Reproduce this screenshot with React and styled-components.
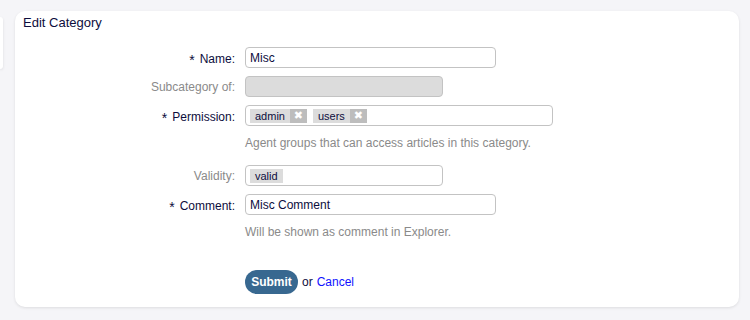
import React from "react";
import styled, { createGlobalStyle } from "styled-components";

const GlobalStyle = createGlobalStyle`
  html, body {
    margin: 0;
    padding: 0;
    background: #f5f5f8;
    font-family: "Liberation Sans", Arial, sans-serif;
    font-size: 12px;
    color: #0d0d3d;
  }
`;

const fields = [
  { label: "Name", required: true, type: "text", value: "Misc", width: 251 },
  { label: "Subcategory of", type: "disabled", width: 198 },
  {
    label: "Permission",
    required: true,
    type: "tags",
    tags: ["admin", "users"],
    width: 308,
    help: "Agent groups that can access articles in this category.",
  },
  { label: "Validity", type: "chip", value: "valid", width: 198 },
  {
    label: "Comment",
    required: true,
    type: "text",
    value: "Misc Comment",
    width: 251,
    help: "Will be shown as comment in Explorer.",
  },
];

function App() {
  return (
    <>
      <GlobalStyle />
      <Page>
        <SideStub />
        <Card>
          <Title>Edit Category</Title>
          <Form>
            {fields.map((f) => (
              <Field key={f.label} $help={!!f.help}>
                <Row>
                  <Label $required={f.required}>
                    {f.required && <Star>*</Star>}
                    {f.label}:
                  </Label>
                  {f.type === "text" && (
                    <Input $width={f.width} defaultValue={f.value} />
                  )}
                  {f.type === "disabled" && (
                    <Box $width={f.width} $disabled />
                  )}
                  {f.type === "tags" && (
                    <Box $width={f.width}>
                      {f.tags.map((t) => (
                        <Tag key={t}>
                          <TagText>{t}</TagText>
                          <TagRemove>✖</TagRemove>
                        </Tag>
                      ))}
                    </Box>
                  )}
                  {f.type === "chip" && (
                    <Box $width={f.width}>
                      <Tag>
                        <TagText>{f.value}</TagText>
                      </Tag>
                    </Box>
                  )}
                </Row>
                {f.help && <Help>{f.help}</Help>}
              </Field>
            ))}
            <Actions>
              <SubmitButton type="button">Submit</SubmitButton>
              <span>or</span>
              <CancelLink href="#">Cancel</CancelLink>
            </Actions>
          </Form>
        </Card>
      </Page>
    </>
  );
}

const Page = styled.div`
  display: flex;
  align-items: flex-start;
  gap: 12px;
  padding: 11px 11px 13px 0;
  box-sizing: border-box;
  height: 320px;
`;

const SideStub = styled.div`
  width: 3px;
  height: 52px;
  margin-top: 6px;
  background: #fff;
  border-radius: 0 6px 6px 0;
  box-shadow: 0 1px 3px rgba(0, 0, 0, 0.1);
`;

const Card = styled.section`
  flex: 1;
  height: 296px;
  box-sizing: border-box;
  background: #fff;
  border-radius: 10px;
  box-shadow: 0 1px 3px rgba(0, 0, 0, 0.1);
  padding: 4px 8px;
`;

const Title = styled.h2`
  margin: 0;
  font-size: 13px;
  line-height: 16px;
  font-weight: normal;
  color: #0d0d3d;
`;

const Form = styled.form`
  margin-top: 16px;
  display: flex;
  flex-direction: column;
  gap: 8px;
`;

const Field = styled.div`
  display: flex;
  flex-direction: column;
  margin-bottom: ${(p) => (p.$help ? "7px" : "0")};
`;

const Row = styled.div`
  display: flex;
  align-items: center;
  gap: 10px;
`;

const Label = styled.label`
  width: 212px;
  text-align: right;
  font-size: 12px;
  color: ${(p) => (p.$required ? "#0d0d3d" : "#8a8a8a")};
`;

const Star = styled.span`
  font-size: 14px;
  margin-right: 5px;
  position: relative;
  top: 2px;
`;

const Input = styled.input`
  width: ${(p) => p.$width}px;
  height: 21px;
  box-sizing: border-box;
  border: 1px solid #c3c3c3;
  border-radius: 4px;
  padding: 0 4px;
  font-family: "Liberation Sans", Arial, sans-serif;
  font-size: 12px;
  color: #0d0d3d;
  outline: none;
`;

const Box = styled.div`
  width: ${(p) => p.$width}px;
  height: 21px;
  box-sizing: border-box;
  border: 1px solid #c3c3c3;
  border-radius: 4px;
  background: ${(p) => (p.$disabled ? "#dcdcdc" : "#fff")};
  display: flex;
  align-items: center;
  gap: 6px;
  padding: 0 4px;
`;

const Tag = styled.span`
  display: flex;
  height: 14px;
  align-items: stretch;
  background: #dcdcdc;
  font-size: 11px;
  line-height: 14px;
`;

const TagText = styled.span`
  padding: 0 5px;
  color: #0d0d3d;
`;

const TagRemove = styled.span`
  width: 17px;
  background: #bdbdbd;
  color: #fff;
  font-size: 11px;
  text-align: center;
  font-family: "DejaVu Sans", sans-serif;
`;

const Help = styled.div`
  margin: 10px 0 0 222px;
  color: #8a8a8a;
  font-size: 12px;
  line-height: 14px;
`;

const Actions = styled.div`
  margin: 16px 0 0 222px;
  display: flex;
  align-items: center;
  gap: 4px;
  font-size: 12px;
`;

const SubmitButton = styled.button`
  width: 53px;
  height: 24px;
  border: none;
  border-radius: 12px;
  background: #386890;
  color: #fff;
  font-family: "Liberation Sans", Arial, sans-serif;
  font-weight: bold;
  font-size: 12px;
  padding: 0;
  cursor: pointer;
`;

const CancelLink = styled.a`
  color: #1010ff;
  text-decoration: none;
`;

export default App;
